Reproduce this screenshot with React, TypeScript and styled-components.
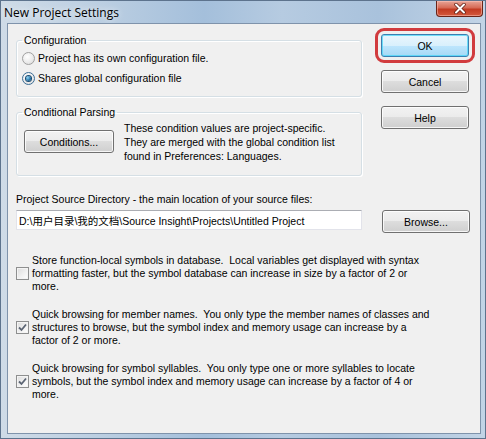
import styled, { createGlobalStyle } from 'styled-components';

const GlobalStyle = createGlobalStyle`
  html, body {
    margin: 0;
    padding: 0;
  }
  body {
    background: #ffffff;
    font-family: 'Liberation Sans', Arial, 'Noto Sans CJK SC', sans-serif;
  }
`;

const Window = styled.div`
  box-sizing: border-box;
  width: 486px;
  height: 439px;
  display: flex;
  flex-direction: column;
  border: 1px solid #5d738d;
  background: linear-gradient(
    to right,
    #cfdbe7 0%,
    #bccfe2 20%,
    #a4bfdb 42%,
    #b6cbe1 58%,
    #a9c2dc 78%,
    #c2d4e6 100%
  );
`;

const TitleBar = styled.div`
  height: 22px;
  display: flex;
  align-items: center;
  padding-left: 3px;
`;

const Title = styled.span`
  font-family: 'Open Sans', 'Liberation Sans', sans-serif;
  font-size: 12px;
  color: #000;
  text-shadow: 0 0 6px rgba(255, 255, 255, 0.9);
`;

const CloseButton = styled.div`
  box-sizing: border-box;
  margin-left: auto;
  margin-right: 2px;
  align-self: flex-start;
  width: 47px;
  height: 16px;
  display: flex;
  align-items: center;
  justify-content: center;
  border: 1px solid #6a2418;
  border-top: none;
  border-radius: 0 0 4px 4px;
  background: linear-gradient(#e7a597 0%, #d66a55 45%, #c23b22 55%, #d45a3e 100%);
  box-shadow: inset 0 0 0 1px rgba(255, 200, 190, 0.5);
`;

const Client = styled.div`
  flex: 1;
  margin: 0 4px 4px 6px;
  border: 1px solid #7f93ab;
  background: #f0f0f0;
  padding: 10px 8px 0 8px;
  font-size: 10px;
  color: #000;
`;

const TopRow = styled.div`
  display: flex;
  align-items: flex-start;
`;

const LeftCol = styled.div`
  width: 346px;
`;

const RightCol = styled.div`
  margin-left: 19px;
  display: flex;
  flex-direction: column;
  gap: 13px;
`;

const Group = styled.fieldset`
  margin: 0;
  padding: 0;
  border: 1px solid #d5dfe5;
  border-radius: 3px;
  box-shadow: inset 1px 1px 0 #ffffff, 1px 1px 0 #ffffff;
  & + & {
    margin-top: 9px;
  }
`;

const Legend = styled.legend`
  margin-left: 5px;
  padding: 0 2px;
  font-size: 10.5px;
  line-height: 13px;
`;

const RadioList = styled.div`
  padding: 1px 0 8px 5px;
`;

const RadioRow = styled.label`
  height: 20px;
  display: flex;
  align-items: center;
  gap: 3px;
  font-size: 10.5px;
`;

const RadioDot = styled.span<{ $checked?: boolean }>`
  box-sizing: border-box;
  width: 13px;
  height: 13px;
  border-radius: 50%;
  border: 1px solid ${({ $checked }) => ($checked ? '#3c6e96' : '#a0a0a0')};
  background: radial-gradient(circle at 40% 35%, #ffffff 0%, #e9e9e9 60%, #d4d4d4 100%);
  display: flex;
  align-items: center;
  justify-content: center;
  &::after {
    content: '';
    display: ${({ $checked }) => ($checked ? 'block' : 'none')};
    width: 5px;
    height: 5px;
    border-radius: 50%;
    background: radial-gradient(circle at 35% 35%, #8fd5f5 0%, #1f6fa3 60%, #0d3f66 100%);
    box-shadow: 0 0 0 1px #1a4a70;
  }
`;

const ParsingBody = styled.div`
  padding: 2px 0 12px 7px;
  display: flex;
  align-items: flex-start;
  gap: 10px;
`;

const Note = styled.p`
  margin: 0;
  font-size: 10.5px;
  line-height: 14px;
  white-space: pre;
`;

const Button = styled.button<{ $default?: boolean; $width?: number; $marked?: boolean }>`
  box-sizing: border-box;
  flex-shrink: 0;
  width: ${({ $width }) => $width ?? 88}px;
  height: 23px;
  padding: 0;
  font-family: 'Liberation Sans', Arial, sans-serif;
  font-size: 10.5px;
  color: #000;
  border-radius: 3px;
  border: 1px solid ${({ $default }) => ($default ? '#3c7fb1' : '#707070')};
  background: ${({ $default }) =>
    $default
      ? 'linear-gradient(#eaf6fd 0%, #d9f0fc 50%, #bee6fd 50%, #a7d9f5 100%)'
      : 'linear-gradient(#f2f2f2 0%, #ebebeb 50%, #dddddd 50%, #cfcfcf 100%)'};
  box-shadow: inset 0 0 0 1px
    ${({ $default }) => ($default ? 'rgba(72, 214, 247, 0.75)' : 'rgba(255, 255, 255, 0.8)')};
  outline: ${({ $marked }) => ($marked ? '3px solid #d13b3e' : 'none')};
  outline-offset: 3px;
`;

const SourceLabel = styled.div`
  margin-top: 17px;
  font-size: 10.5px;
  line-height: 13px;
`;

const SourceRow = styled.div`
  margin-top: 4px;
  display: flex;
  align-items: flex-start;
  gap: 20px;
`;

const PathInput = styled.input`
  box-sizing: border-box;
  width: 346px;
  height: 20px;
  margin: 0;
  padding: 0 2px;
  border: 1px solid #e2e3ea;
  border-top-color: #abadb3;
  background: #ffffff;
  font-family: 'Liberation Sans', Arial, 'Noto Sans CJK SC', sans-serif;
  font-size: 10.5px;
  color: #000;
  outline: none;
`;

const Options = styled.div`
  margin-top: 21px;
  display: flex;
  flex-direction: column;
  gap: 15px;
`;

const Option = styled.label`
  display: flex;
  align-items: center;
  gap: 3px;
`;

const Box = styled.span`
  box-sizing: border-box;
  width: 13px;
  height: 13px;
  flex-shrink: 0;
  border: 1px solid #8e8f8f;
  background: linear-gradient(135deg, #dcdcdc 0%, #f2f2f2 60%, #ffffff 100%);
  box-shadow: inset 0 0 0 1px #f4f4f4;
  display: flex;
  align-items: center;
  justify-content: center;
`;

const OptionText = styled.span`
  font-size: 10.5px;
  line-height: 13px;
  white-space: pre;
`;

const CheckBox = ({ checked }: { checked?: boolean }) => (
  <Box>
    {checked && (
      <svg width="9" height="9" viewBox="0 0 9 9">
        <path d="M1 4.5 L3.5 7 L8 1.5" fill="none" stroke="#5b6473" strokeWidth="1.8" />
      </svg>
    )}
  </Box>
);

const options = [
  {
    checked: false,
    text:
      'Store function-local symbols in database.  Local variables get displayed with syntax\n' +
      'formatting faster, but the symbol database can increase in size by a factor of 2 or\n' +
      'more.',
  },
  {
    checked: true,
    text:
      'Quick browsing for member names.  You only type the member names of classes and\n' +
      'structures to browse, but the symbol index and memory usage can increase by a\n' +
      'factor of 2 or more.',
  },
  {
    checked: true,
    text:
      'Quick browsing for symbol syllables.  You only type one or more syllables to locate\n' +
      'symbols, but the symbol index and memory usage can increase by a factor of 4 or\n' +
      'more.',
  },
];

const App = () => {
  return (
    <>
      <GlobalStyle />
      <Window>
        <TitleBar>
          <Title>New Project Settings</Title>
          <CloseButton>
            <svg width="12" height="11" viewBox="0 0 12 11">
              <path d="M2 1.5 L10 9.5 M10 1.5 L2 9.5" stroke="#5a1a10" strokeWidth="3.4" strokeLinecap="round" />
              <path d="M2 1.5 L10 9.5 M10 1.5 L2 9.5" stroke="#ffffff" strokeWidth="2" strokeLinecap="round" />
            </svg>
          </CloseButton>
        </TitleBar>
        <Client>
          <TopRow>
            <LeftCol>
              <Group>
                <Legend>Configuration</Legend>
                <RadioList>
                  <RadioRow>
                    <RadioDot />
                    Project has its own configuration file.
                  </RadioRow>
                  <RadioRow>
                    <RadioDot $checked />
                    Shares global configuration file
                  </RadioRow>
                </RadioList>
              </Group>
              <Group>
                <Legend>Conditional Parsing</Legend>
                <ParsingBody>
                  <Button $width={90} style={{ marginTop: 9 }}>
                    Conditions...
                  </Button>
                  <Note>
                    {'These condition values are project-specific.\n' +
                      'They are merged with the global condition list\n' +
                      'found in Preferences: Languages.'}
                  </Note>
                </ParsingBody>
              </Group>
            </LeftCol>
            <RightCol>
              <Button $default $marked>
                OK
              </Button>
              <Button>Cancel</Button>
              <Button>Help</Button>
            </RightCol>
          </TopRow>
          <SourceLabel>Project Source Directory - the main location of your source files:</SourceLabel>
          <SourceRow>
            <PathInput readOnly value="D:\用户目录\我的文档\Source Insight\Projects\Untitled Project" />
            <Button>Browse...</Button>
          </SourceRow>
          <Options>
            {options.map((o, i) => (
              <Option key={i}>
                <CheckBox checked={o.checked} />
                <OptionText>{o.text}</OptionText>
              </Option>
            ))}
          </Options>
        </Client>
      </Window>
    </>
  );
};

export default App;
